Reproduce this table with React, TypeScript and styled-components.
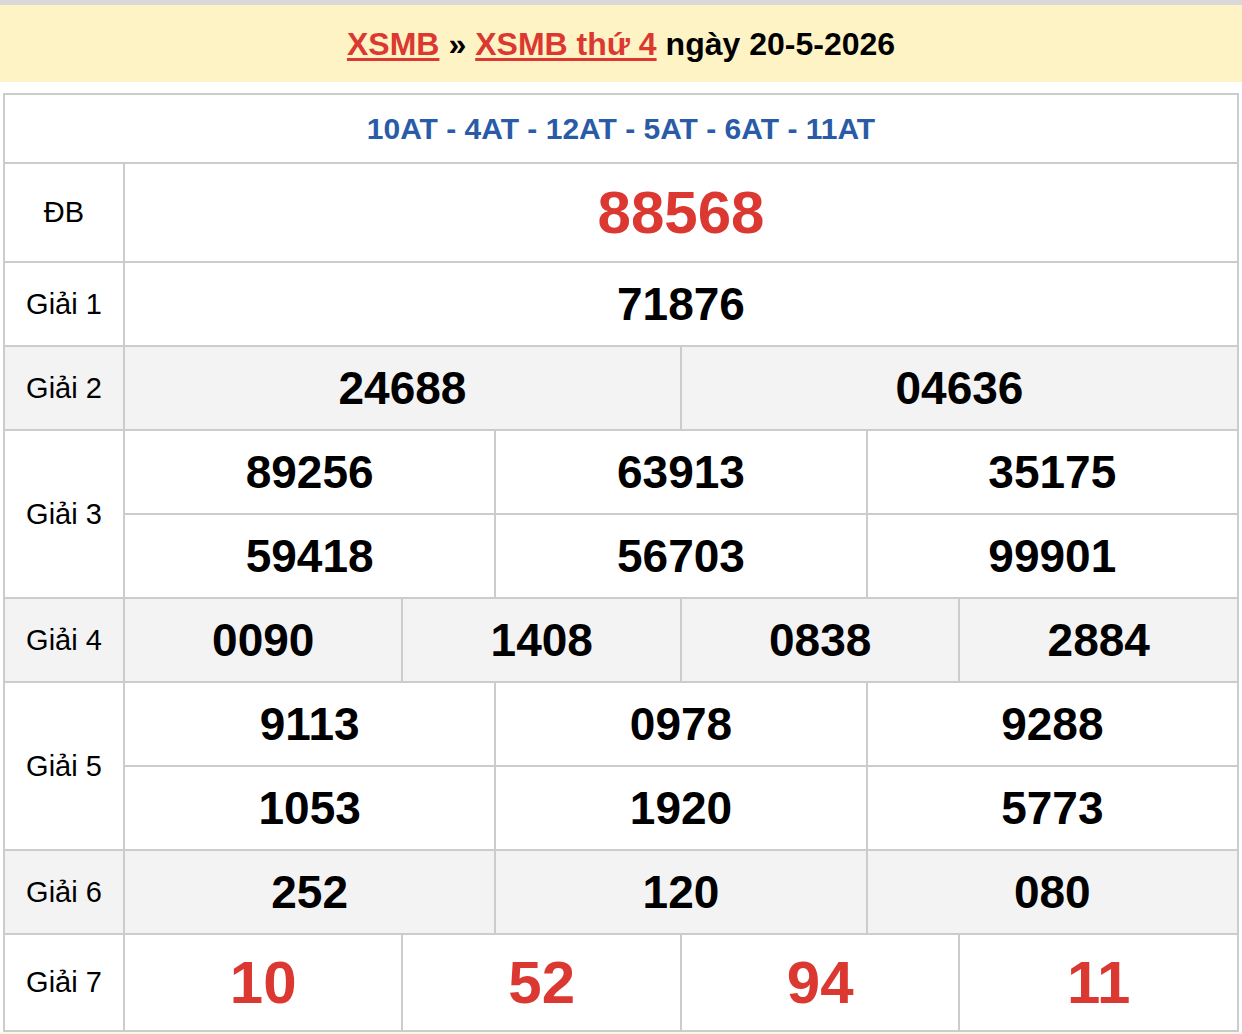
import React from 'react';
import styled, { createGlobalStyle } from 'styled-components';

const Global = createGlobalStyle`
  html, body {
    margin: 0;
    padding: 0;
    background: #fff;
    font-family: "Liberation Sans", Arial, Helvetica, sans-serif;
  }
`;

const TopStrip = styled.div`
  height: 5px;
  background: #d9d9d9;
`;

const Banner = styled.h2`
  margin: 0;
  height: 77px;
  padding-top: 2px;
  box-sizing: border-box;
  background: #fdf3c5;
  display: flex;
  align-items: center;
  justify-content: center;
  gap: 9px;
  font-size: 32px;
  font-weight: bold;
  color: #000;
`;

const Crumb = styled.a`
  color: #dc3832;
  text-decoration: underline;
  text-decoration-thickness: 3px;
  text-underline-offset: 3px;
`;

const Table = styled.table`
  margin: 11px 3px 0;
  width: calc(100% - 6px);
  border-collapse: collapse;
  table-layout: fixed;
  border: 2px solid #ccc;
`;

const Row = styled.tr<{ $h: number; $shade?: boolean }>`
  height: ${p => p.$h}px;
  background: ${p => (p.$shade ? '#f3f3f3' : '#fff')};
`;

const Provinces = styled.td`
  border: 2px solid #ccc;
  text-align: center;
  font-size: 30px;
  font-weight: bold;
  color: #2a5ba6;
  padding: 0;
`;

const Label = styled.td`
  border: 2px solid #ccc;
  text-align: center;
  vertical-align: middle;
  font-size: 29px;
  color: #000;
  padding: 0;
`;

const Num = styled.td<{ $size?: number; $red?: boolean }>`
  border: 2px solid #ccc;
  text-align: center;
  vertical-align: middle;
  font-weight: bold;
  font-size: ${p => p.$size ?? 46}px;
  color: ${p => (p.$red ? '#dc3832' : '#000')};
  padding: 0;
`;

const Tail = styled.div`
  height: 4px;
  background: #fdf8e6;
`;

type Prize = {
  label: string;
  rows: string[][];
  shade?: boolean;
  size?: number;
  red?: boolean;
  height: number;
};

const prizes: Prize[] = [
  { label: 'ĐB', rows: [['88568']], size: 60, red: true, height: 99 },
  { label: 'Giải 1', rows: [['71876']], height: 84 },
  { label: 'Giải 2', rows: [['24688', '04636']], shade: true, height: 84 },
  { label: 'Giải 3', rows: [['89256', '63913', '35175'], ['59418', '56703', '99901']], height: 84 },
  { label: 'Giải 4', rows: [['0090', '1408', '0838', '2884']], shade: true, height: 84 },
  { label: 'Giải 5', rows: [['9113', '0978', '9288'], ['1053', '1920', '5773']], height: 84 },
  { label: 'Giải 6', rows: [['252', '120', '080']], shade: true, height: 84 },
  { label: 'Giải 7', rows: [['10', '52', '94', '11']], size: 60, red: true, height: 97 },
];

export default function App() {
  return (
    <>
      <Global />
      <TopStrip />
      <Banner>
        <Crumb href="#">XSMB</Crumb>
        <span>»</span>
        <Crumb href="#">XSMB thứ 4</Crumb>
        <span>ngày 20-5-2026</span>
      </Banner>
      <Table>
        <colgroup>
          <col style={{ width: 120 }} />
          {Array.from({ length: 12 }).map((_, i) => (
            <col key={i} />
          ))}
        </colgroup>
        <tbody>
          <Row $h={69}>
            <Provinces colSpan={13}>10AT - 4AT - 12AT - 5AT - 6AT - 11AT</Provinces>
          </Row>
          {prizes.map(p =>
            p.rows.map((nums, ri) => (
              <Row key={p.label + ri} $h={p.height} $shade={p.shade}>
                {ri === 0 && <Label rowSpan={p.rows.length}>{p.label}</Label>}
                {nums.map((n, ni) => (
                  <Num key={ni} colSpan={12 / nums.length} $size={p.size} $red={p.red}>
                    {n}
                  </Num>
                ))}
              </Row>
            ))
          )}
        </tbody>
      </Table>
      <Tail />
    </>
  );
}
